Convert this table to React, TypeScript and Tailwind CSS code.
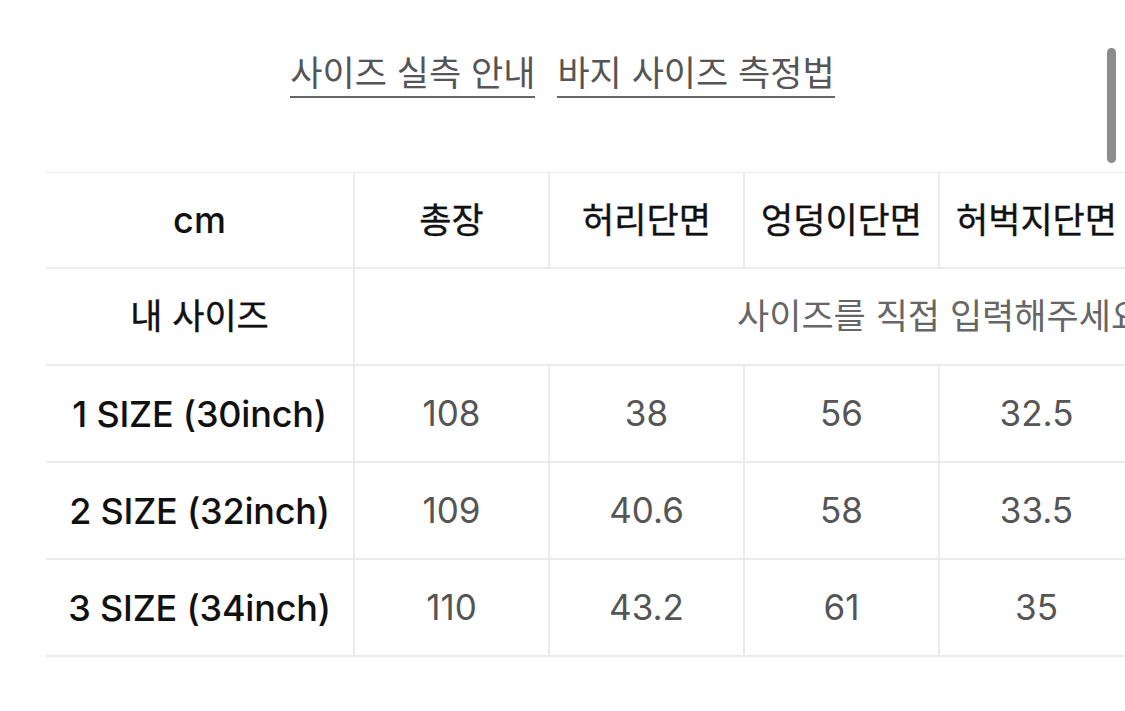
const font = { fontFamily: 'Inter, "Noto Sans CJK KR", sans-serif' };

const headers = ["총장", "허리단면", "엉덩이단면", "허벅지단면"];

const rows = [
  { name: "1 SIZE (30inch)", values: ["108", "38", "56", "32.5"] },
  { name: "2 SIZE (32inch)", values: ["109", "40.6", "58", "33.5"] },
  { name: "3 SIZE (34inch)", values: ["110", "43.2", "61", "35"] },
];

export default function App() {
  return (
    <div className="relative h-[711px] w-[1125px] overflow-hidden bg-white" style={font}>
      <div className="flex h-[172px] justify-center gap-[22px] pt-[51px]">
        <a className="h-fit border-b-2 border-[#666] pb-[1px] text-[35px] leading-[44px] text-[#555]">
          사이즈 실측 안내
        </a>
        <a className="h-fit border-b-2 border-[#666] pb-[1px] text-[35px] leading-[44px] text-[#555]">
          바지 사이즈 측정법
        </a>
      </div>

      <div className="overflow-hidden pl-[46px]">
        <div className="grid w-max grid-cols-[309px_repeat(4,195px)] border-t border-[#ececec] text-[35px]">
          <div className="flex h-[96px] items-center justify-center border-r-2 border-b-2 border-[#ebebeb] text-[36px] font-medium text-[#111]">
            cm
          </div>
          {headers.map((h) => (
            <div
              key={h}
              className="flex h-[96px] items-center justify-center border-r-2 border-b-2 border-[#ebebeb] text-[#111] [-webkit-text-stroke:0.4px_#111]"
            >
              {h}
            </div>
          ))}

          <div className="flex h-[97px] items-center justify-center border-r-2 border-b-2 border-[#ebebeb] text-[#111] [-webkit-text-stroke:0.4px_#111]">
            내 사이즈
          </div>
          <div className="col-span-4 flex h-[97px] items-center overflow-hidden whitespace-nowrap border-b-2 border-[#ebebeb] pl-[382px] text-[#666]">
            사이즈를 직접 입력해주세요
          </div>

          {rows.map((r) => (
            <div key={r.name} className="contents">
              <div className="flex h-[97px] items-center justify-center border-r-2 border-b-2 border-[#ebebeb] text-[36px] font-medium tracking-[-0.2px] text-[#111]">
                {r.name}
              </div>
              {r.values.map((v, i) => (
                <div
                  key={i}
                  className="flex h-[97px] items-center justify-center border-r-2 border-b-2 border-[#ebebeb] text-[#555]"
                >
                  {v}
                </div>
              ))}
            </div>
          ))}
        </div>
      </div>

      <div className="absolute top-[48px] left-[1107px] h-[115px] w-[9px] rounded-full bg-[#8c8c8c]" />
    </div>
  );
}
